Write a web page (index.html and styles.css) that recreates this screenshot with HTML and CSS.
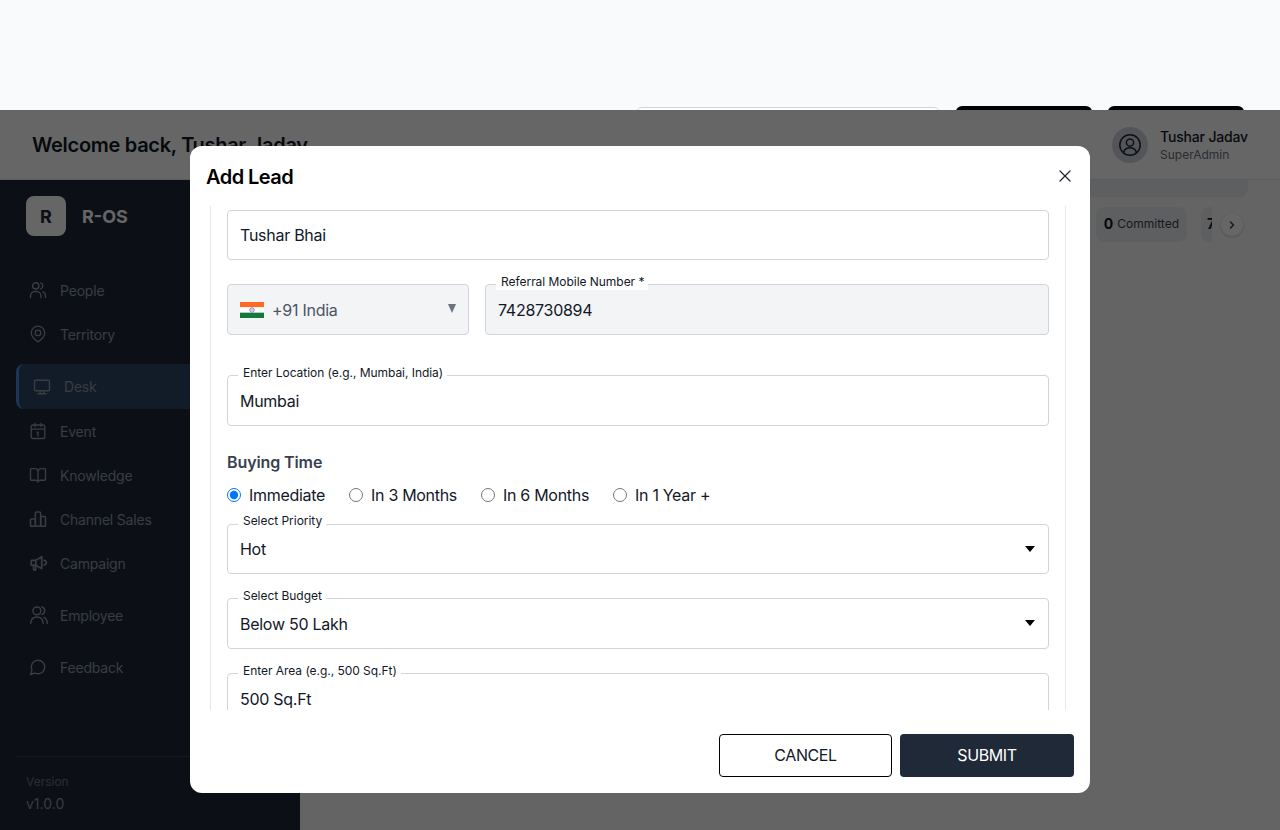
FILE: index.html
```html
<!DOCTYPE html>
<html lang="en">
<head>
    <meta charset="UTF-8">
    <meta name="viewport" content="width=device-width, initial-scale=1.0">
    <title>R-OS</title>
    <link rel="stylesheet" href="styles.css">
</head>
<body>

    <div class="topStrip">
        <input class="topSearch" type="text">
        <button class="topButton" type="button"></button>
        <button class="topButton" type="button"></button>
    </div>

    <header class="header">
        <h1>Welcome back, Tushar Jadav</h1>
        <div class="user">
            <span class="avatar">
                <svg width="24" height="24" viewBox="0 0 24 24" fill="none" stroke="currentColor" stroke-width="1.5" stroke-linecap="round" stroke-linejoin="round"><circle cx="12" cy="12" r="10.2"/><circle cx="12" cy="9.5" r="3.6"/><path d="M5.6 19.2c1-3 3.4-4.4 6.4-4.4s5.400 1.400 6.400 4.400"/></svg>
            </span>
            <div>
                <div class="userName">Tushar Jadav</div>
                <div class="userRole">SuperAdmin</div>
            </div>
        </div>
    </header>

    <div class="shell">
        <aside class="sidebar">
            <div class="brand">
                <span class="brandMark">R</span>
                <span class="brandName">R-OS</span>
            </div>
            <nav class="nav">
                <a class="navItem">
                    <svg width="18" height="18" viewBox="0 0 24 24" fill="none" stroke="currentColor" stroke-width="1.800" stroke-linecap="round" stroke-linejoin="round"><circle cx="9" cy="6.500" r="4.200"/><path d="M2 22v-2a6 6 0 0 1 6-6h2a6 6 0 0 1 6 6v2"/><path d="M15.500 2.500a4.200 4.200 0 0 1 0 8"/><path d="M22 22v-2a6 6 0 0 0-3.500-5.400"/></svg>
                    People
                </a>
                <a class="navItem">
                    <svg width="18" height="18" viewBox="0 0 24 24" fill="none" stroke="currentColor" stroke-width="1.800" stroke-linecap="round" stroke-linejoin="round"><path d="M21 10.500c0 5.500-5.500 9.500-9 12-3.500-2.500-9-6.500-9-12a9 9 0 0 1 18 0Z"/><circle cx="12" cy="10.500" r="3.700"/></svg>
                    Territory
                </a>
                <a class="navItem navActive">
                    <svg width="18" height="18" viewBox="0 0 24 24" fill="none" stroke="currentColor" stroke-width="1.800" stroke-linecap="round" stroke-linejoin="round"><rect x="2" y="3" width="20" height="14" rx="1.500"/><path d="M6.500 21h11"/><path d="M9.500 17v4"/><path d="M14.500 17v4"/></svg>
                    Desk
                </a>
                <a class="navItem">
                    <svg width="18" height="18" viewBox="0 0 24 24" fill="none" stroke="currentColor" stroke-width="1.800" stroke-linecap="round" stroke-linejoin="round"><rect x="3" y="4" width="18" height="18" rx="2"/><path d="M16 2v4"/><path d="M8 2v4"/><path d="M3 9.500h18"/><path d="M10.800 14.200 12 13.500v5"/></svg>
                    Event
                </a>
                <a class="navItem">
                    <svg width="18" height="18" viewBox="0 0 24 24" fill="none" stroke="currentColor" stroke-width="1.800" stroke-linecap="round" stroke-linejoin="round"><path d="M12 7v14"/><path d="M3 3.500h5a4 4 0 0 1 4 3.500 4 4 0 0 1 4-3.500h5a1 1 0 0 1 1 1V18a1 1 0 0 1-1 1h-6a3 3 0 0 0-3 2 3 3 0 0 0-3-2H3a1 1 0 0 1-1-1V4.500a1 1 0 0 1 1-1Z"/></svg>
                    Knowledge
                </a>
                <a class="navItem">
                    <svg width="18" height="18" viewBox="0 0 24 24" fill="none" stroke="currentColor" stroke-width="2" stroke-linecap="round" stroke-linejoin="round"><rect x="2" y="12" width="6.500" height="9.500" rx="1"/><rect x="8.500" y="2.500" width="7" height="19" rx="1.500"/><rect x="15.500" y="8.500" width="6.500" height="13" rx="1"/></svg>
                    Channel Sales
                </a>
                <a class="navItem">
                    <svg width="18" height="18" viewBox="0 0 24 24" fill="none" stroke="currentColor" stroke-width="2.200" stroke-linecap="round" stroke-linejoin="round"><path d="M3 8.500h6L17 3.500v16L9 15H3z"/><path d="M9 8.500V15"/><path d="M6 15v5a1.500 1.500 0 0 0 3 0v-5"/><path d="M20 8.500a3 3 0 0 1 0 6"/></svg>
                    Campaign
                </a>
                <a class="navItem navSpaced">
                    <svg width="20" height="20" viewBox="0 0 24 24" fill="none" stroke="currentColor" stroke-width="1.800" stroke-linecap="round" stroke-linejoin="round"><circle cx="9.500" cy="7" r="4.700"/><path d="M2 22c.3-4.800 3.200-7.500 7.500-7.500S16.700 17.200 17 22"/><path d="M15.500 2.500a4.700 4.700 0 0 1 0 9"/><path d="M18 14.800c2.400 1.200 3.800 3.700 4 7.200"/></svg>
                    Employee
                </a>
                <a class="navItem navSpaced navFeedback">
                    <svg width="18" height="18" viewBox="0 0 24 24" fill="none" stroke="currentColor" stroke-width="1.800" stroke-linecap="round" stroke-linejoin="round"><path d="M7.900 20A9 9 0 1 0 4 16.100L2 22Z"/></svg>
                    Feedback
                </a>
            </nav>
            <div class="sideFooter">
                <div class="versionLabel">Version</div>
                <div class="versionNumber">v1.0.0</div>
            </div>
        </aside>

        <main class="main">
            <div class="mainBar"></div>
            <div class="chips">
                <div class="chip"><b>0</b> Committed</div>
                <div class="chip chipCut"><b>7</b></div>
                <span class="chipNext">
                    <svg width="12" height="12" viewBox="0 0 24 24" fill="none" stroke="currentColor" stroke-width="3" stroke-linecap="round" stroke-linejoin="round"><path d="m9 18 6-6-6-6"/></svg>
                </span>
            </div>
        </main>
    </div>

    <div class="backdrop">
        <div class="modal">
            <div class="modalHeader">
                <h2>Add Lead</h2>
                <button class="closeButton" type="button">
                    <svg width="20" height="20" viewBox="0 0 24 24" fill="none" stroke="currentColor" stroke-width="1.500" stroke-linecap="round"><path d="M18 6 6 18"/><path d="m6 6 12 12"/></svg>
                </button>
            </div>

            <div class="modalBody">
                <div class="field nameField">
                    <input type="text" value="Tushar Bhai">
                </div>

                <div class="phoneRow">
                    <div class="countryPicker">
                        <svg class="flag" width="24" height="16" viewBox="0 0 24 16"><rect width="24" height="5.330" fill="#ff6b22"/><rect y="5.330" width="24" height="5.340" fill="#fff"/><rect y="10.670" width="24" height="5.330" fill="#137a3c"/><circle cx="12" cy="8" r="2.200" fill="none" stroke="#6d6fb5" stroke-width="0.900"/><circle cx="12" cy="8" r="0.700" fill="#6d6fb5"/></svg>
                        <span class="countryText">+91 India</span>
                        <span class="countryArrow"></span>
                    </div>
                    <div class="field phoneField">
                        <label>Referral Mobile Number *</label>
                        <input class="tallInput grayInput" type="text" value="7428730894">
                    </div>
                </div>

                <div class="field locationField">
                    <label>Enter Location (e.g., Mumbai, India)</label>
                    <input class="tallInput" type="text" value="Mumbai">
                </div>

                <h3 class="groupTitle">Buying Time</h3>
                <div class="radioRow">
                    <label class="radio"><input type="radio" name="buyingTime" checked> Immediate</label>
                    <label class="radio"><input type="radio" name="buyingTime"> In 3 Months</label>
                    <label class="radio"><input type="radio" name="buyingTime"> In 6 Months</label>
                    <label class="radio"><input type="radio" name="buyingTime"> In 1 Year +</label>
                </div>

                <div class="field selectField priorityField">
                    <label>Select Priority</label>
                    <select><option>Hot</option></select>
                </div>

                <div class="field selectField budgetField">
                    <label>Select Budget</label>
                    <select class="tallInput"><option>Below 50 Lakh</option></select>
                </div>

                <div class="field areaField">
                    <label>Enter Area (e.g., 500 Sq.Ft)</label>
                    <input class="tallInput" type="text" value="500 Sq.Ft">
                </div>
            </div>

            <div class="modalFooter">
                <button class="cancelButton" type="button">CANCEL</button>
                <button class="submitButton" type="button">SUBMIT</button>
            </div>
        </div>
    </div>

</body>
</html>
```

FILE: styles.css
```css
* {
    box-sizing: border-box;
}

html,
body {
    height: 100%;
}

body {
    font-family: Inter, "Liberation Sans", sans-serif;
    background-color: #f9fafb;
    color: #111827;
    margin: 0;
    overflow: hidden;
    display: flex;
    flex-direction: column;
}

.topStrip {
    height: 110px;
    flex-shrink: 0;
    display: flex;
    align-items: flex-start;
    justify-content: flex-end;
    gap: 16px;
    padding: 106px 36px 0 0;
    overflow: hidden;
}

.topSearch {
    width: 304px;
    height: 40px;
    margin-top: 1px;
    background-color: #fff;
    border: 1px solid #d1d5db;
    border-radius: 6px;
}

.topButton {
    width: 136px;
    height: 40px;
    background-color: #000;
    border: none;
    border-radius: 6px;
}

.header {
    height: 70px;
    flex-shrink: 0;
    background-color: #fff;
    border-bottom: 1px solid #e5e7eb;
    display: flex;
    align-items: center;
    justify-content: space-between;
    padding: 0 32px;
}

.header h1 {
    margin: 0;
    font-size: 20px;
    font-weight: 600;
    letter-spacing: -0.3px;
    color: #111827;
}

.user {
    display: flex;
    align-items: center;
    gap: 12px;
}

.avatar {
    width: 36px;
    height: 36px;
    border-radius: 50%;
    background-color: #d1d5db;
    color: #1f2937;
    display: flex;
    align-items: center;
    justify-content: center;
}

.userName {
    font-size: 14px;
    font-weight: 500;
    line-height: 20px;
    letter-spacing: -0.17px;
}

.userRole {
    font-size: 12px;
    line-height: 16px;
    color: #6b7280;
}

.shell {
    flex: 1;
    min-height: 0;
    display: flex;
}

.sidebar {
    width: 300px;
    flex-shrink: 0;
    background-color: #1e2939;
    color: #8f97a3;
    display: flex;
    flex-direction: column;
}

.brand {
    display: flex;
    align-items: center;
    gap: 16px;
    padding: 16px 26px;
}

.brandMark {
    width: 40px;
    height: 40px;
    border-radius: 8px;
    background-color: #fff;
    color: #1e2939;
    font-size: 18px;
    font-weight: 700;
    display: flex;
    align-items: center;
    justify-content: center;
}

.brandName {
    font-size: 18px;
    font-weight: 700;
    color: #fff;
}

.nav {
    margin-top: 16px;
    padding: 0 16px;
    display: flex;
    flex-direction: column;
}

.navItem {
    height: 44px;
    display: flex;
    align-items: center;
    gap: 13px;
    padding-left: 13px;
    font-size: 14px;
    letter-spacing: -0.2px;
}

.navActive {
    height: 45px;
    margin-top: 8px;
    padding-left: 14px;
    background-color: #2d4565;
    border-left: 3px solid #4a86d8;
    border-radius: 8px;
}

.navSpaced {
    margin-top: 8px;
    gap: 11px;
}

.navFeedback {
    gap: 13px;
}

.sideFooter {
    margin: auto 0 0 16px;
    padding: 15px 10px 16px;
    border-top: 1px solid #374151;
}

.versionLabel {
    font-size: 12px;
    line-height: 20px;
    color: #6b7280;
}

.versionNumber {
    margin-top: 2px;
    font-size: 14px;
    line-height: 20px;
}

.main {
    flex: 1;
    min-width: 0;
    padding-right: 32px;
}

.mainBar {
    height: 17px;
    background-color: #eceef1;
    border-radius: 0 0 8px 8px;
}

.chips {
    margin: 10px 5px 0 0;
    display: flex;
    align-items: center;
    justify-content: flex-end;
    gap: 14px;
}

.chip {
    height: 35px;
    padding: 0 8px 2px;
    background-color: #eceef1;
    border-radius: 8px;
    font-size: 12px;
    color: #374151;
    display: flex;
    align-items: center;
    gap: 4px;
}

.chip b {
    font-size: 14px;
    color: #111827;
}

.chipCut {
    width: 11px;
    padding: 0 0 2px 6px;
    overflow: hidden;
    border-radius: 8px 0 0 8px;
}

.chipNext {
    width: 22px;
    height: 22px;
    margin-left: -5px;
    border-radius: 50%;
    background-color: #fff;
    box-shadow: 0 1px 3px rgba(0, 0, 0, 0.2);
    color: #374151;
    display: flex;
    align-items: center;
    justify-content: center;
}

.backdrop {
    position: absolute;
    top: 110px;
    left: 0;
    right: 0;
    bottom: 0;
    padding-top: 36px;
    background-color: rgba(0, 0, 0, 0.6);
    display: flex;
    align-items: flex-start;
    justify-content: center;
}

.modal {
    width: 900px;
    height: 647px;
    background-color: #fff;
    border-radius: 12px;
    display: flex;
    flex-direction: column;
}

.modalHeader {
    height: 60px;
    flex-shrink: 0;
    display: flex;
    align-items: center;
    justify-content: space-between;
    padding: 0 15px 0 16px;
}

.modalHeader h2 {
    margin: 2px 0 0;
    font-size: 20px;
    font-weight: 600;
    letter-spacing: -0.55px;
    color: #000;
}

.closeButton {
    padding: 0;
    background: none;
    border: none;
    color: #1f2937;
    display: flex;
}

.modalBody {
    height: 504px;
    flex-shrink: 0;
    margin: 0 24px 0 20px;
    padding: 4px 16px 0;
    overflow: hidden;
    border-left: 1px solid #e5e7eb;
    border-right: 1px solid #e5e7eb;
}

.field {
    position: relative;
}

.field label {
    position: absolute;
    top: -10px;
    left: 11px;
    padding: 0 4px 0 5px;
    background-color: #fff;
    font-size: 12px;
    line-height: 16px;
    letter-spacing: -0.04px;
    color: #111827;
}

.field input,
.field select {
    width: 100%;
    height: 50px;
    padding: 0 12px;
    background-color: #fff;
    border: 1px solid #d1d5db;
    border-radius: 4px;
    font-family: inherit;
    font-size: 16px;
    letter-spacing: -0.27px;
    color: #111827;
    outline: none;
}

.field select {
    appearance: none;
}

.field .tallInput {
    height: 51px;
    padding-top: 1px;
}

.field .grayInput {
    background-color: #f3f4f6;
}

.selectField::after {
    content: "";
    position: absolute;
    top: 22px;
    right: 14px;
    border-left: 5px solid transparent;
    border-right: 5px solid transparent;
    border-top: 6px solid #000;
}

.phoneRow {
    display: flex;
    gap: 16px;
    margin-top: 24px;
}

.countryPicker {
    width: 242px;
    height: 51px;
    flex-shrink: 0;
    display: flex;
    align-items: center;
    gap: 8px;
    padding: 1px 12px 0;
    background-color: #f3f4f6;
    border: 1px solid #d1d5db;
    border-radius: 4px;
    font-size: 16px;
    letter-spacing: -0.27px;
    color: #4b5563;
}

.countryText {
    flex: 1;
}

.countryArrow {
    margin-bottom: 3px;
    border-left: 4px solid transparent;
    border-right: 4px solid transparent;
    border-top: 9px solid #6b7280;
}

.phoneField {
    flex: 1;
}

.locationField {
    margin-top: 40px;
}

.groupTitle {
    margin: 26px 0 0;
    font-size: 16px;
    line-height: 20px;
    font-weight: 600;
    letter-spacing: -0.1px;
    color: #374151;
}

.radioRow {
    display: flex;
    gap: 24px;
    margin-top: 13px;
}

.radio {
    display: flex;
    align-items: center;
    gap: 8px;
    font-size: 16px;
    line-height: 20px;
    letter-spacing: -0.3px;
    color: #111827;
}

.radio input {
    width: 14px;
    height: 14px;
    margin: 0;
}

.priorityField {
    margin-top: 19px;
}

.priorityField label {
    top: -11px;
}

.budgetField {
    margin-top: 24px;
}

.areaField {
    margin-top: 24px;
}

.modalFooter {
    flex: 1;
    display: flex;
    align-items: flex-start;
    justify-content: flex-end;
    gap: 8px;
    padding: 24px 16px 0;
}

.cancelButton,
.submitButton {
    height: 43px;
    padding-bottom: 2px;
    border-radius: 4px;
    font-family: inherit;
    font-size: 16px;
    letter-spacing: -0.4px;
}

.cancelButton {
    width: 173px;
    background-color: #fff;
    border: 1px solid #000;
    color: #111827;
}

.submitButton {
    width: 174px;
    background-color: #1f2937;
    border: none;
    color: #fff;
}
```
